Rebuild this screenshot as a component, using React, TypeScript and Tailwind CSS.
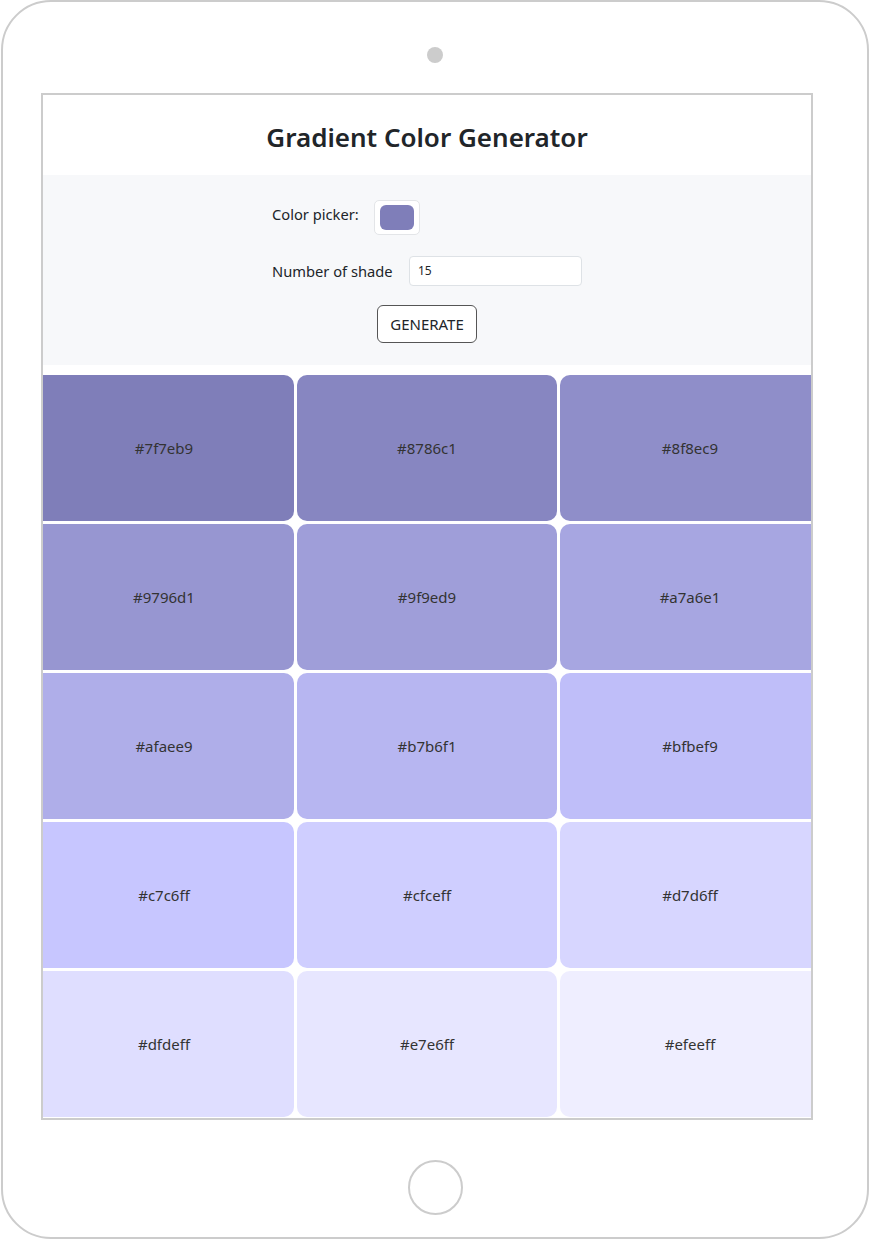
import React from 'react';

const shades = [
    '#7f7eb9', '#8786c1', '#8f8ec9',
    '#9796d1', '#9f9ed9', '#a7a6e1',
    '#afaee9', '#b7b6f1', '#bfbef9',
    '#c7c6ff', '#cfceff', '#d7d6ff',
    '#dfdeff', '#e7e6ff', '#efeeff',
];

const App: React.FC = () => {
    return (
        <div className="w-[870px] h-[1240px] bg-white px-[1px] font-['Noto_Sans','Open_Sans',sans-serif] text-[#212529]">
            {/* Tablet frame */}
            <div className="w-[868px] h-[1239px] border-2 border-[#cccccc] rounded-[50px] flex flex-col">
                <div className="self-center w-4 h-4 rounded-full bg-[#cccccc] mt-[45px]" />

                {/* Screen */}
                <div className="ml-[38px] mt-[30px] w-[772px] h-[1027px] border-2 border-[#cccccc] overflow-hidden flex flex-col">
                    <div className="h-[80px] bg-white flex items-center justify-center pt-[3px]">
                        <h1 className="text-[26px] font-semibold leading-none">Gradient Color Generator</h1>
                    </div>

                    {/* Controls */}
                    <div className="h-[190px] bg-[#f7f8fa] flex flex-col items-center pt-[25px]">
                        <div className="w-[310px] flex flex-col">
                            <div className="flex items-start">
                                <label className="text-[14.7px] mt-[3px] w-[102px]">Color picker:</label>
                                <div className="w-[46px] h-[35px] bg-white border border-[#e3e5e8] rounded-[5px] flex items-center justify-center">
                                    <div className="w-[34px] h-[25px] rounded-[6px] bg-[#7f7eb9]" />
                                </div>
                            </div>
                            <div className="flex items-center mt-[21px]">
                                <label className="text-[14.7px] w-[137px]">Number of shade</label>
                                <div className="w-[173px] h-[30px] bg-white border border-[#dee2e6] rounded-[4px] flex items-center px-[8px] text-[12px]">
                                    15
                                </div>
                            </div>
                        </div>
                        <button className="mt-[19px] w-[100px] h-[38px] border border-[#555] rounded-[6px] bg-white text-[15px] text-[#212529]">
                            GENERATE
                        </button>
                    </div>

                    {/* Shades */}
                    <div className="mt-[10px] -ml-[9px] w-[786px] grid grid-cols-3 gap-x-[3px] gap-y-[3px]">
                        {shades.map((c) => (
                            <div
                                key={c}
                                className="h-[146px] rounded-[10px] flex items-center justify-center text-[15px] text-[#333]"
                                style={{ backgroundColor: c }}
                            >
                                {c}
                            </div>
                        ))}
                    </div>
                </div>

                <div className="self-center w-[55px] h-[55px] rounded-full border-2 border-[#cccccc] mt-[40px]" />
            </div>
        </div>
    );
};

export default App;
